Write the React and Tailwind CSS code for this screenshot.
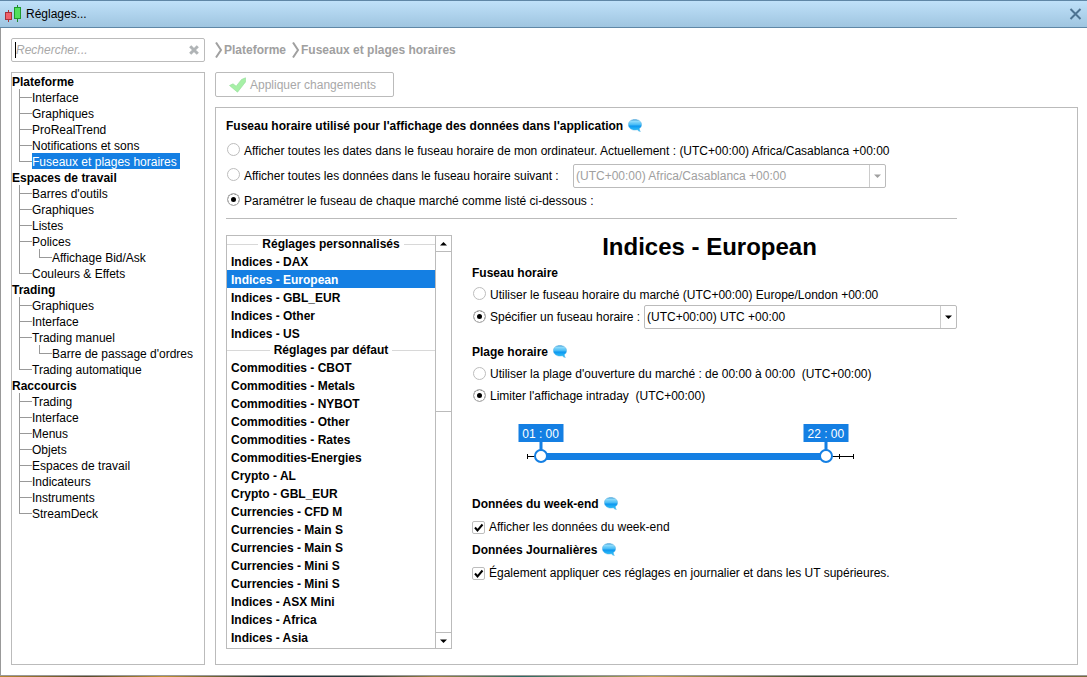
import React, { useState } from "react";

const TREE = [
  {
    title: "Plateforme",
    items: [
      { label: "Interface" },
      { label: "Graphiques" },
      { label: "ProRealTrend" },
      { label: "Notifications et sons" },
      { label: "Fuseaux et plages horaires" },
    ],
  },
  {
    title: "Espaces de travail",
    items: [
      { label: "Barres d'outils" },
      { label: "Graphiques" },
      { label: "Listes" },
      { label: "Polices", child: "Affichage Bid/Ask" },
      { label: "Couleurs & Effets" },
    ],
  },
  {
    title: "Trading",
    items: [
      { label: "Graphiques" },
      { label: "Interface" },
      { label: "Trading manuel", child: "Barre de passage d'ordres" },
      { label: "Trading automatique" },
    ],
  },
  {
    title: "Raccourcis",
    items: [
      { label: "Trading" },
      { label: "Interface" },
      { label: "Menus" },
      { label: "Objets" },
      { label: "Espaces de travail" },
      { label: "Indicateurs" },
      { label: "Instruments" },
      { label: "StreamDeck" },
    ],
  },
];

const CUSTOM = ["Indices - DAX", "Indices - European", "Indices - GBL_EUR", "Indices - Other", "Indices - US"];

const DEFAULTS = [
  "Commodities - CBOT",
  "Commodities - Metals",
  "Commodities - NYBOT",
  "Commodities - Other",
  "Commodities - Rates",
  "Commodities-Energies",
  "Crypto - AL",
  "Crypto - GBL_EUR",
  "Currencies - CFD M",
  "Currencies - Main S",
  "Currencies - Main S",
  "Currencies - Mini S",
  "Currencies - Mini S",
  "Indices - ASX Mini",
  "Indices - Africa",
  "Indices - Asia",
];

function Candles() {
  return (
    <svg width="18" height="18" viewBox="0 0 18 18" aria-hidden="true">
      <path d="M4.500 5v12" stroke="#a33" />
      <rect x="1.500" y="7.500" width="6" height="7" fill="#f0616a" stroke="#a8323a" />
      <path d="M13.500 0v17" stroke="#1f8a2c" />
      <rect x="10.500" y="2.500" width="6" height="11" fill="#52e05c" stroke="#1f9a2c" />
    </svg>
  );
}

function Bubble() {
  return (
    <svg className="mb-0.5" width="14" height="13" viewBox="0 0 14 13" aria-hidden="true">
      <defs>
        <linearGradient id="bubble" x1="0" y1="0" x2="0" y2="1">
          <stop offset="0" stopColor="#3a98d4" />
          <stop offset="0.15" stopColor="#8fdcfb" />
          <stop offset="0.42" stopColor="#4bbdf6" />
          <stop offset="0.55" stopColor="#0d98f0" />
          <stop offset="1" stopColor="#3cccfb" />
        </linearGradient>
      </defs>
      <path
        d="M6.800 .4C10.500 .4 13.600 2.500 13.600 5.600c0 1.800-.9 3.200-2.300 4.200.1 1.100.5 2 1.100 2.800-1.300-.2-2.300-.8-3.100-1.800-.8.200-1.600.3-2.500.3C3.100 11.100.4 8.700.4 5.600.4 2.500 3.100.4 6.800 .4z"
        fill="url(#bubble)"
        stroke="#4aa6dc"
        strokeWidth=".4"
      />
    </svg>
  );
}

function Chevron() {
  return (
    <svg width="8" height="16" viewBox="0 0 8 16" aria-hidden="true">
      <path d="M1 .5l5 7.500-5 7.500" fill="none" stroke="#a0a0a0" strokeWidth="2" />
    </svg>
  );
}

function Arrow({ up }) {
  return (
    <svg width="7" height="4" viewBox="0 0 7 4" fill="currentColor" aria-hidden="true">
      {up ? <path d="M0 3.500L3.500 0 7 3.500z" /> : <path d="M0 .5h7L3.500 4z" />}
    </svg>
  );
}

function TreeRow({ label, last, nested, selected }) {
  return (
    <li className="flex h-4 pl-[7px]">
      {nested && <span className="w-5 border-l border-[#999]" />}
      <span className="flex w-[13px] flex-col">
        <span className="h-[9px] border-b border-l border-[#999]" />
        {!last && <span className="flex-1 border-l border-[#999]" />}
      </span>
      <button
        type="button"
        className={
          selected
            ? "h-4 bg-[#147fe3] pr-[3px] leading-[18px] whitespace-nowrap text-white"
            : "h-4 leading-[18px] whitespace-nowrap"
        }
      >
        {label}
      </button>
    </li>
  );
}

function ListHeader({ children }) {
  return (
    <div className="flex h-4 items-center gap-1 font-bold">
      <span className="h-px flex-1 bg-[#d8d8d8]" />
      {children}
      <span className="h-px flex-1 bg-[#d8d8d8]" />
    </div>
  );
}

function ListItem({ label, selected }) {
  return (
    <button
      type="button"
      className={
        selected
          ? "block h-[18px] w-full bg-[#147fe3] pl-1 text-left leading-5 font-bold text-white"
          : "block h-[18px] w-full pl-1 text-left leading-5 font-bold"
      }
    >
      {label}
    </button>
  );
}

function Radio({ name, checked, children }) {
  return (
    <label className="flex items-center gap-1 whitespace-nowrap">
      <input
        type="radio"
        name={name}
        defaultChecked={checked}
        className="mb-0.5 size-[13px] shrink-0 appearance-none rounded-full border border-[#bdbdbd] bg-white checked:bg-black checked:shadow-[inset_0_0_0_3px_white]"
      />
      {children}
    </label>
  );
}

function Check({ children }) {
  return (
    <label className="relative flex items-center gap-1 whitespace-nowrap">
      <input
        type="checkbox"
        defaultChecked
        className="peer size-[13px] shrink-0 appearance-none rounded-xs border border-[#bdbdbd] bg-white"
      />
      <svg
        className="pointer-events-none invisible absolute left-0 size-[13px] peer-checked:visible"
        viewBox="0 0 13 13"
        aria-hidden="true"
      >
        <path d="M3 6.500l2.500 3L10.500 3.500" fill="none" stroke="#000" strokeWidth="2" />
      </svg>
      {children}
    </label>
  );
}

function Select({ label, value, disabled }) {
  return (
    <span className={disabled ? "relative flex w-[313px] text-[#a0a0a0]" : "relative flex flex-1 text-black"}>
      <select
        aria-label={label}
        disabled={disabled}
        className="h-6 w-full appearance-none rounded-xs border border-[#bbb] bg-white pl-0.5 opacity-100"
      >
        <option>{value}</option>
      </select>
      <span className="pointer-events-none absolute inset-y-px right-px flex w-4 items-center justify-center border-l border-[#ccc]">
        <Arrow />
      </span>
    </span>
  );
}

const RANGE =
  "pointer-events-none absolute top-[25px] left-0 h-[14px] w-full appearance-none bg-transparent [&::-webkit-slider-thumb]:pointer-events-auto [&::-webkit-slider-thumb]:size-[14px] [&::-webkit-slider-thumb]:appearance-none [&::-webkit-slider-thumb]:rounded-full [&::-webkit-slider-thumb]:border-2 [&::-webkit-slider-thumb]:border-[#147fe3] [&::-webkit-slider-thumb]:bg-white";

function TimeRange() {
  const [from, setFrom] = useState(1);
  const [to, setTo] = useState(22);
  const pct = (h) => `${(h / 24) * 100}%`;
  const text = (h) => `${String(h).padStart(2, "0")} : 00`;
  return (
    <div className="relative h-10 w-[340px]">
      <div className="absolute inset-x-[7px] top-0 h-full">
        <span className="absolute top-8 h-px w-full bg-black" />
        {[0, 23, 24].map((h) => (
          <span key={h} className="absolute top-[30px] h-[5px] w-px bg-black" style={{ left: pct(h) }} />
        ))}
        <span
          className="absolute top-[29px] h-[7px] bg-[#147fe3]"
          style={{ left: pct(from), width: pct(to - from) }}
        />
        {[from, to].map((h, i) => (
          <output
            key={i}
            className="absolute top-0 flex h-7 -translate-x-1/2 flex-col items-center text-white"
            style={{ left: pct(h) }}
          >
            <span className="h-[18px] w-[45px] bg-[#147fe3] text-center leading-5 whitespace-nowrap">{text(h)}</span>
            <span className="w-[3px] flex-1 bg-[#147fe3]" />
          </output>
        ))}
      </div>
      <input
        type="range"
        aria-label="Début de la plage"
        min="0"
        max="24"
        value={from}
        onChange={(e) => setFrom(Math.min(Number(e.target.value), to - 1))}
        className={RANGE}
      />
      <input
        type="range"
        aria-label="Fin de la plage"
        min="0"
        max="24"
        value={to}
        onChange={(e) => setTo(Math.max(Number(e.target.value), from + 1))}
        className={RANGE}
      />
    </div>
  );
}

export default function App() {
  return (
    <div className="flex min-h-screen flex-col bg-white font-['Liberation_Sans',Arial,sans-serif] text-[12px] leading-4 text-black">
      <header className="flex h-7 items-center gap-1 border-y border-[#5f87a6] bg-linear-to-b from-[#bfe1f9] to-[#9fc5e0] pr-[5px] pl-1">
        <Candles />
        <h1 className="flex-1 leading-[18px]">Réglages...</h1>
        <button type="button" aria-label="Fermer" className="text-[#4d7391]">
          <svg width="13" height="13" viewBox="0 0 13 13" aria-hidden="true">
            <path d="M1.500 1l10 10M11.500 1l-10 10" stroke="currentColor" strokeWidth="2" />
          </svg>
        </button>
      </header>

      <div className="flex flex-1 gap-2.5 border-b border-l border-[#999] pt-2.5 pr-[9px] pb-2.5 pl-2.5">
        <nav className="flex w-[194px] shrink-0 flex-col gap-2.5">
          <div className="relative">
            <input
              type="text"
              aria-label="Rechercher"
              placeholder="Rechercher..."
              className="block h-6 w-full rounded-xs border border-[#bbb] pr-6 pl-1 placeholder:text-[#a8a8a8] placeholder:italic"
            />
            <span className="absolute top-1 left-1 h-4 w-px bg-black" />
            <button type="button" aria-label="Effacer" className="absolute top-[7px] right-1.5 text-[#b0b4b6]">
              <svg width="10" height="10" viewBox="0 0 10 10" aria-hidden="true">
                <path d="M1.200 1.200l7.600 7.600M8.800 1.200l-7.600 7.600" stroke="currentColor" strokeWidth="3" />
              </svg>
            </button>
          </div>
          <div className="flex-1 border border-[#bbb]">
            {TREE.map((group, g) => (
              <section key={group.title}>
                <h2 className="h-4 leading-[18px] font-bold">{group.title}</h2>
                <ul>
                  {group.items.map((item, i) => (
                    <React.Fragment key={item.label}>
                      <TreeRow
                        label={item.label}
                        last={i === group.items.length - 1}
                        selected={g === 0 && i === 4}
                      />
                      {item.child && <TreeRow label={item.child} last nested />}
                    </React.Fragment>
                  ))}
                </ul>
              </section>
            ))}
          </div>
        </nav>

        <main className="flex min-w-0 flex-1 flex-col">
          <div className="flex h-6 items-center gap-px leading-[18px] font-bold text-[#a0a0a0]">
            <Chevron />
            <span className="pr-[5px]">Plateforme</span>
            <Chevron />
            <span>Fuseaux et plages horaires</span>
          </div>
          <button
            type="button"
            disabled
            className="mt-2.5 flex h-[25px] w-[179px] items-center gap-1 rounded-xs border border-[#bbb] pl-[13px] text-[#a8a8a8]"
          >
            <svg width="17" height="16" viewBox="0 0 17 16" aria-hidden="true">
              <path
                d="M.5 8.500L4 6.800l3.200 2.400L12.500 2.500 16.500.8v4.200L8.500 15.200z"
                fill="#a6f0a6"
                stroke="#94dc98"
                strokeWidth=".6"
              />
            </svg>
            Appliquer changements
          </button>

          <section className="mt-2.5 flex-1 border border-[#bbb] px-2.5 pt-2.5 pb-[15px]">
            <h2 className="flex h-4 items-center gap-[5px] leading-[18px] font-bold">
              Fuseau horaire utilisé pour l'affichage des données dans l'application <Bubble />
            </h2>
            <div className="mt-1 flex flex-col pl-px">
              <div className="flex h-[25px] items-center">
                <Radio name="display">
                  Afficher toutes les dates dans le fuseau horaire de mon ordinateur. Actuellement : (UTC+00:00)
                  Africa/Casablanca +00:00
                </Radio>
              </div>
              <div className="flex h-[25px] items-center">
                <div className="w-[346px]">
                  <Radio name="display">Afficher toutes les données dans le fuseau horaire suivant :</Radio>
                </div>
                <Select label="Fuseau de toutes les données" value="(UTC+00:00) Africa/Casablanca +00:00" disabled />
              </div>
              <div className="flex h-[25px] items-center">
                <Radio name="display" checked>
                  Paramétrer le fuseau de chaque marché comme listé ci-dessous :
                </Radio>
              </div>
            </div>
            <hr className="mt-[5px] max-w-[731px] border-[#bbb]" />

            <div className="mt-4 flex max-w-[731px] items-start gap-2.5">
              <div className="flex h-[414px] w-[226px] shrink-0 border border-[#bbb]">
                <div className="flex-1">
                  <ListHeader>Réglages personnalisés</ListHeader>
                  {CUSTOM.map((label, i) => (
                    <ListItem key={label} label={label} selected={i === 1} />
                  ))}
                  <ListHeader>Réglages par défaut</ListHeader>
                  {DEFAULTS.map((label, i) => (
                    <ListItem key={i} label={label} />
                  ))}
                </div>
                <div className="flex w-4 flex-col border-l border-[#bbb]">
                  <button
                    type="button"
                    aria-label="Monter"
                    className="flex h-4 items-center justify-center border-b border-[#bbb]"
                  >
                    <Arrow up />
                  </button>
                  <div className="h-40 border-b border-[#bbb]" />
                  <div className="flex-1" />
                  <button
                    type="button"
                    aria-label="Descendre"
                    className="flex h-4 items-center justify-center border-t border-[#bbb]"
                  >
                    <Arrow />
                  </button>
                </div>
              </div>

              <div className="min-w-0 flex-1">
                <h2 className="text-center text-[24px] leading-6 font-bold">Indices - European</h2>
                <div className="pl-2.5">
                  <h3 className="mt-1.5 flex h-4 items-center leading-[18px] font-bold">Fuseau horaire</h3>
                  <div className="mt-[3px] flex flex-col pl-px">
                    <div className="flex h-[21px] items-center">
                      <Radio name="zone">Utiliser le fuseau horaire du marché (UTC+00:00) Europe/London +00:00</Radio>
                    </div>
                    <div className="flex h-6 items-center">
                      <div className="w-[171px]">
                        <Radio name="zone" checked>
                          Spécifier un fuseau horaire :
                        </Radio>
                      </div>
                      <Select label="Fuseau horaire du marché" value="(UTC+00:00) UTC +00:00" />
                    </div>
                  </div>
                  <h3 className="mt-[15px] flex h-4 items-center gap-[5px] leading-[18px] font-bold">
                    Plage horaire <Bubble />
                  </h3>
                  <div className="mt-[3px] flex flex-col pl-px">
                    <div className="flex h-[22px] items-center">
                      <Radio name="hours">Utiliser la plage d'ouverture du marché : de 00:00 à 00:00&nbsp; (UTC+00:00)</Radio>
                    </div>
                    <div className="flex h-[22px] items-center">
                      <Radio name="hours" checked>
                        Limiter l'affichage intraday&nbsp; (UTC+00:00)
                      </Radio>
                    </div>
                  </div>
                  <div className="mt-[17px] ml-12">
                    <TimeRange />
                  </div>
                  <h3 className="mt-8 flex h-4 items-center gap-[5px] leading-[18px] font-bold">
                    Données du week-end <Bubble />
                  </h3>
                  <div className="mt-[7px]">
                    <Check>Afficher les données du week-end</Check>
                  </div>
                  <h3 className="mt-[7px] flex h-4 items-center gap-[5px] leading-[18px] font-bold">
                    Données Journalières <Bubble />
                  </h3>
                  <div className="mt-[7px]">
                    <Check>Également appliquer ces réglages en journalier et dans les UT supérieures.</Check>
                  </div>
                </div>
              </div>
            </div>
          </section>
        </main>
      </div>
      <div className="h-px bg-[linear-gradient(90deg,#b8862f,#5a4a2a_8%,#c09030_15%,#1c3038_25%,#2a3a3a_33%,#9a8040_40%,#2c6a60_48%,#c0a050_60%,#404a30_75%,#7a6a3a)]" />
    </div>
  );
}
